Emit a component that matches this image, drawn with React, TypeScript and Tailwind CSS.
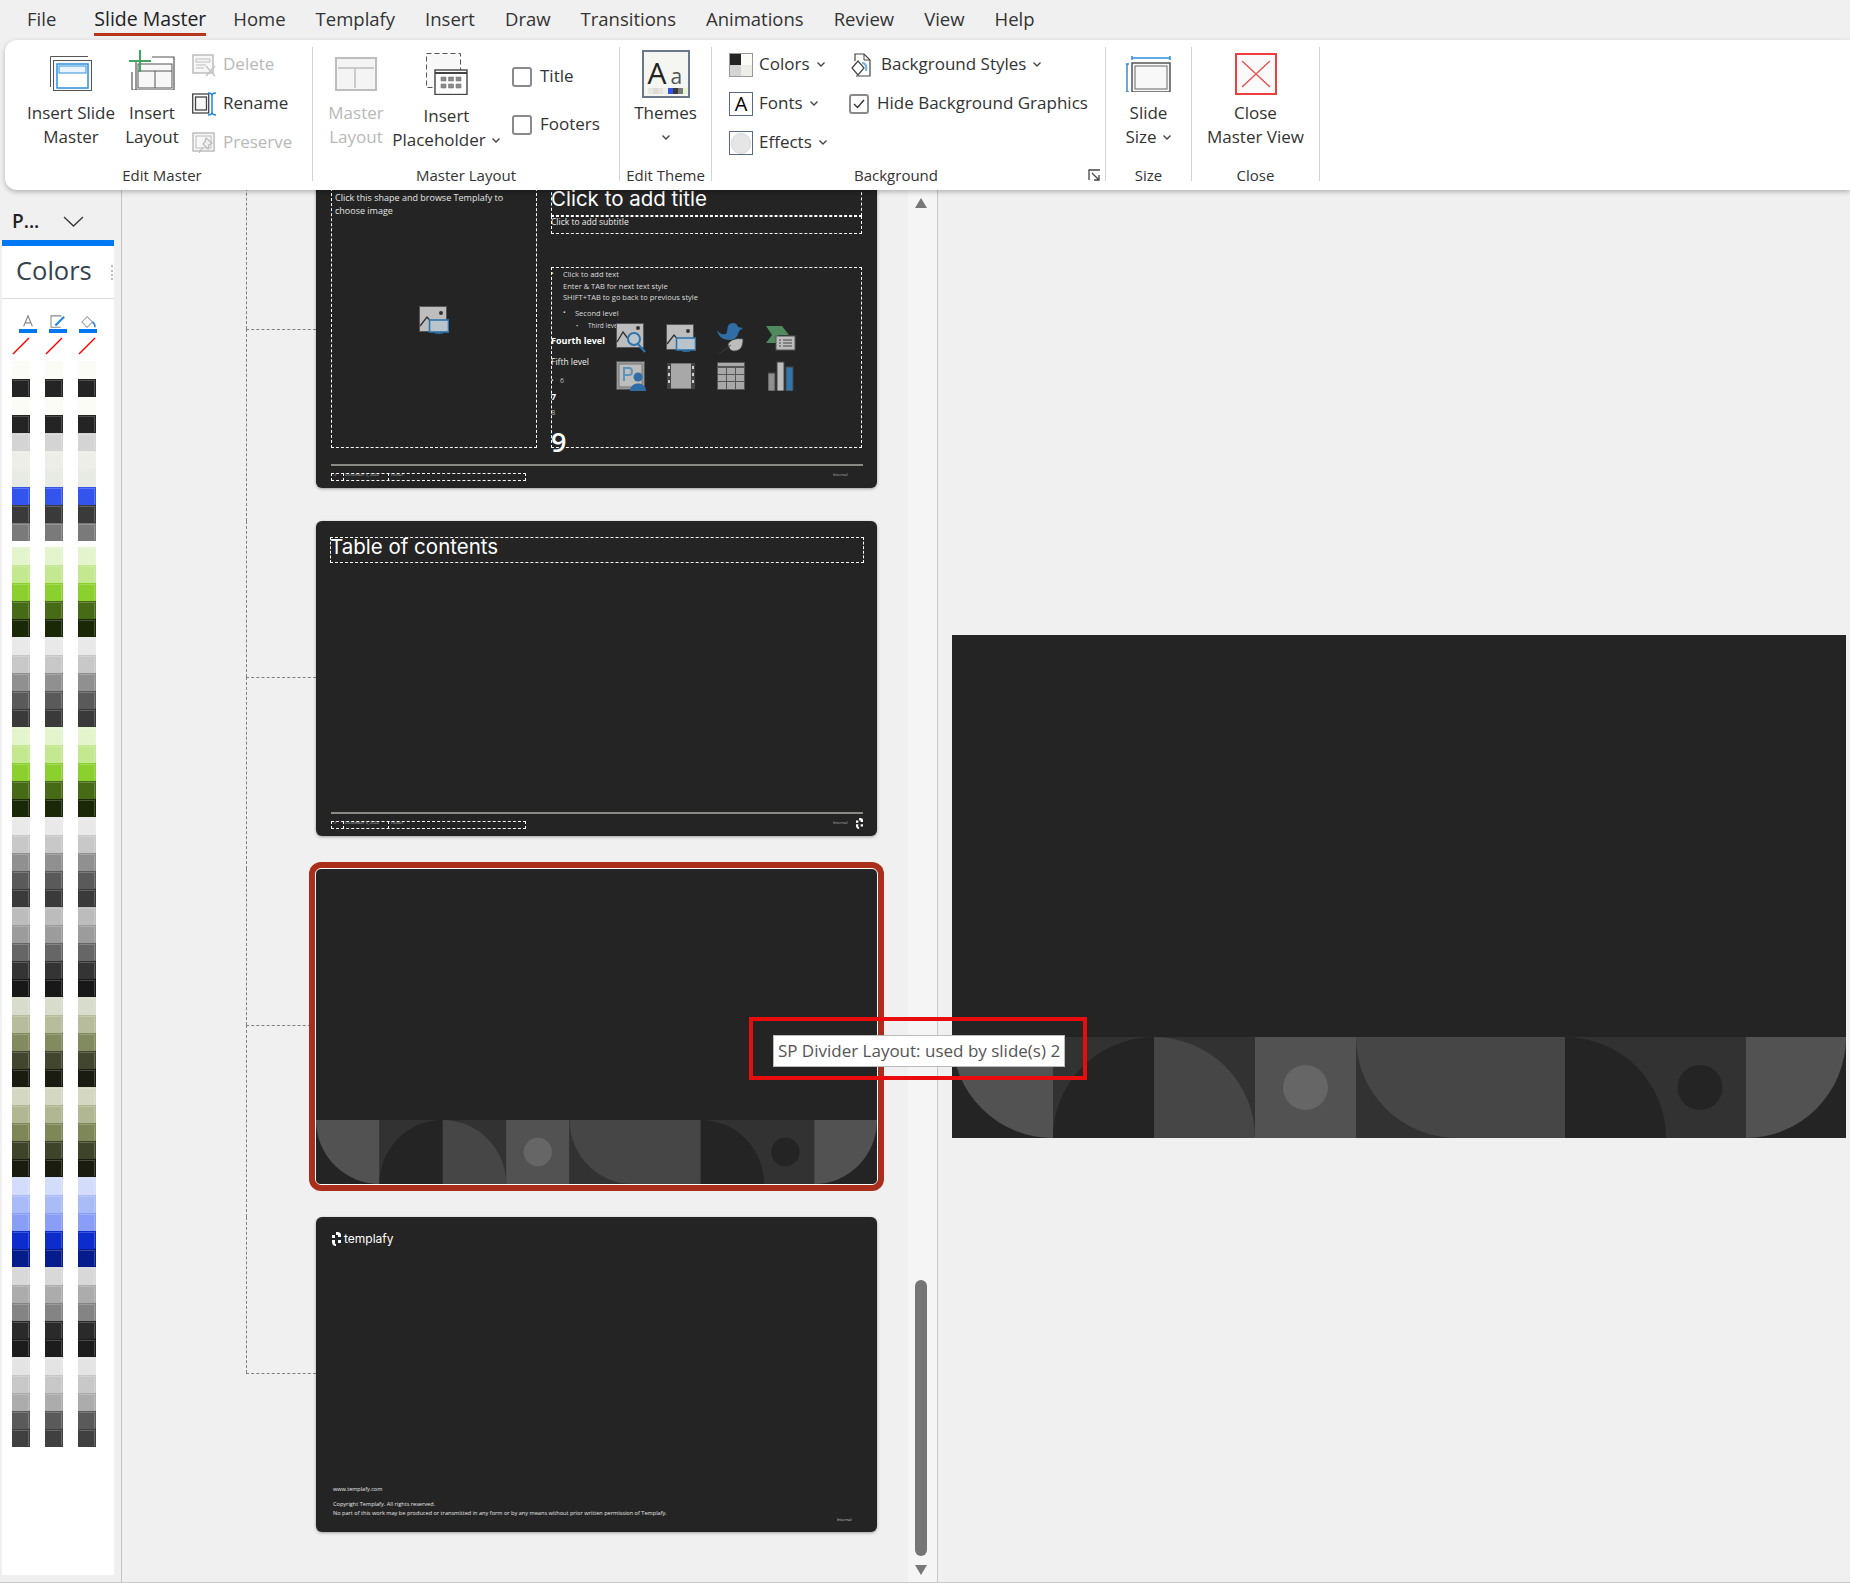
import type { ReactNode } from "react";

const sw = {
  first: ["#fafcf5", "#242424", "#fafcf5", "#242424", "#d4d4d4", "#edeee8", "#e8eae4", "#3355ee", "#3a3a3a", "#7a7a7a"],
  rest: [
    "#e4f4cd", "#c4e890", "#8cd030", "#466a16", "#1a2808",
    "#e9e9e9", "#c8c8c8", "#909090", "#5a5a5a", "#3a3a3a",
    "#e4f4cd", "#c4e890", "#8cd030", "#466a16", "#1a2808",
    "#e9e9e9", "#c8c8c8", "#909090", "#5a5a5a", "#3a3a3a",
    "#bcbcbc", "#9c9c9c", "#666666", "#343434", "#181818",
    "#d8dccc", "#b6bc9c", "#828a60", "#42462e", "#1a1c12",
    "#d4d8c2", "#b0b792", "#7e8758", "#3e442a", "#1a1c10",
    "#d4dcfc", "#aabcf8", "#8a9ef8", "#0c2ccc", "#061c8c",
    "#d8d8d8", "#acacac", "#848484", "#2a2a2a", "#1c1c1c",
    "#e4e4e4", "#c8c8c8", "#acacac", "#5a5a5a", "#404040",
  ],
};

function Chev({ w = 10 }: { w?: number }) {
  return (
    <svg width={w} height={w * 0.7} viewBox="0 0 10 7" fill="none" stroke="#444" strokeWidth="1.4">
      <path d="M1.5 1.5 5 5l3.5-3.5" />
    </svg>
  );
}

/* ---------- ribbon icons ---------- */
const InsertMasterIcon = () => (
  <svg width="42" height="35" viewBox="0 0 42 35">
    <path d="M.5 31V.5H38" fill="none" stroke="#555" />
    <rect x="3.5" y="4.5" width="38" height="30" fill="#f7f7f7" stroke="#555" />
    <rect x="7" y="8" width="31" height="24" fill="#fff" stroke="#2f8fdc" strokeWidth="1.5" />
    <rect x="9" y="10" width="27" height="7" fill="#e9f3fb" stroke="#2f8fdc" />
  </svg>
);
const InsertLayoutIcon = () => (
  <svg width="46" height="40" viewBox="0 0 46 40">
    <path d="M7 40V11M23 7h22v33H3V22" fill="none" stroke="#555" strokeWidth="1.2" />
    <rect x="9" y="14" width="34" height="24" fill="#f7f7f7" stroke="#555" />
    <path d="M9 21h34M26 21v17" stroke="#555" />
    <path d="M11 0v22M0 11h22" stroke="#3fa75f" strokeWidth="2" />
  </svg>
);
const DeleteIcon = () => (
  <svg width="25" height="23" viewBox="0 0 25 23" fill="none" stroke="#bdbdbd">
    <rect x="1" y="1" width="20" height="18" fill="#f7f7f7" strokeWidth="1.5" />
    <path d="M4 5h14v3H4zM4 11h10M4 14h8" />
    <path d="m14 12 9 10M23 12l-9 10" strokeWidth="1.6" stroke="#c4c4c4" />
  </svg>
);
const RenameIcon = () => (
  <svg width="25" height="24" viewBox="0 0 25 24" fill="none">
    <rect x=".7" y="2" width="16" height="19" stroke="#444" strokeWidth="1.3" />
    <rect x="3.500" y="5" width="11" height="13" stroke="#444" strokeWidth="1.300" fill="#f7f7f7" />
    <path d="M16 1c3 0 4 1 4 3v16c0 2 1 3 4 3M24 1c-3 0-4 1-4 3M16 23c3 0 4-1 4-3" stroke="#1e88d8" strokeWidth="1.5" />
  </svg>
);
const PreserveIcon = () => (
  <svg width="25" height="23" viewBox="0 0 25 23" fill="none" stroke="#bdbdbd">
    <rect x="1" y="1" width="21" height="18" fill="#f7f7f7" strokeWidth="1.5" />
    <rect x="4" y="4" width="15" height="12" />
    <path d="m14 6 6 5-3 2-1 4-5-5 2-2zM11 15l-4 6" strokeWidth="1.3" fill="#f0f0f0" />
  </svg>
);
const MasterLayoutIcon = () => (
  <svg width="42" height="34" viewBox="0 0 42 34" fill="none" stroke="#bdbdbd">
    <rect x="1" y="1" width="40" height="32" fill="#f4f4f4" strokeWidth="2" />
    <path d="M3 11h36M20 11v20" strokeWidth="1.5" />
  </svg>
);
const PlaceholderIcon = () => (
  <svg width="42" height="42" viewBox="0 0 42 42" fill="none">
    <rect x=".5" y=".5" width="34" height="34" fill="#f8f8f8" stroke="#555" strokeDasharray="5 3" />
    <rect x="9" y="17" width="32" height="24.5" fill="#fff" stroke="#444" strokeWidth="1.4" />
    <path d="M9 20h32" stroke="#444" strokeWidth="2" />
    <path d="M15 24h5v4h-5zM22.500 24h5v4h-5zM30 24h5v4h-5zM15 31h5v4h-5zM22.500 31h5v4h-5zM30 31h5v4h-5z" fill="#8a8a8a" stroke="#777" strokeWidth=".6" />
  </svg>
);
const ThemesIcon = () => (
  <div className="relative w-[48px] h-[48px] border-2 border-[#6b778a] bg-[#f5f6f2]">
    <span className="absolute left-[4px] top-[3px] text-[30px] leading-[36px] text-[#222]">A</span>
    <span className="absolute left-[27px] top-[12px] text-[21px] leading-[24px] text-[#555]">a</span>
    <div className="absolute left-[4px] top-[36px] flex">
      <i className="w-[5px] h-[6px] bg-[#e8e8e0]" />
      <i className="w-[5px] h-[6px] bg-[#dcdcd4]" />
      <i className="w-[5px] h-[6px] bg-[#e4e4dc]" />
      <i className="w-[5px] h-[6px] bg-[#f0f0e8]" />
      <i className="w-[5px] h-[6px] bg-[#3355ee]" />
      <i className="w-[5px] h-[6px] bg-[#3a3a3a]" />
      <i className="w-[5px] h-[6px] bg-[#7a7a7a]" />
      <i className="w-[5px] h-[6px] bg-[#e4f4cd]" />
    </div>
  </div>
);
const ColorsIcon = () => (
  <div className="w-[24px] h-[24px] grid grid-cols-2 border border-[#999]">
    <i className="bg-[#242424]" />
    <i className="bg-[#fafcf5]" />
    <i className="bg-[#d4d4d4]" />
    <i className="bg-[#edeee8]" />
  </div>
);
const FontsIcon = () => (
  <div className="w-[24px] h-[24px] border border-[#5a6a85] flex items-center justify-center text-[20px] leading-none text-black">A</div>
);
const EffectsIcon = () => (
  <div className="w-[24px] h-[24px] border border-[#5a6a85] flex items-center justify-center">
    <i className="block w-[20px] h-[21px] rounded-full bg-[#e6e6e6] border border-[#d8d8d8]" />
  </div>
);
const BgStylesIcon = () => (
  <svg width="20" height="24" viewBox="0 0 20 24" fill="none" stroke="#444">
    <path d="M4 8V1h9l6 6v16H5" strokeWidth="1.2" />
    <path d="M13 1v6h6" />
    <path d="m1 15 6-7 6 7-6 7z" fill="#fff" strokeWidth="1.2" />
    <path d="M11 10c4 0 5 4 4 8" stroke="#6fb2e8" strokeWidth="2" />
  </svg>
);
const SlideSizeIcon = () => (
  <svg width="45" height="36" viewBox="0 0 45 36" fill="none">
    <path d="M6 2h38M6 0v4M44 0v4M1 8v28M0 8h3M0 36h3" stroke="#2f8fdc" strokeWidth="1.5" />
    <rect x="6" y="7" width="38" height="29" fill="#f8f8f8" stroke="#555" strokeWidth="1.5" />
    <rect x="9" y="10" width="32" height="23" stroke="#666" />
  </svg>
);
const CloseIcon = () => (
  <svg width="42" height="42" viewBox="0 0 42 42" fill="none">
    <rect x="1" y="1" width="40" height="40" fill="#fafafa" stroke="#ef3e3e" strokeWidth="2" />
    <path d="m7 8 28 26M35 8 7 34" stroke="#ef4b4b" strokeWidth="1.3" />
  </svg>
);

function Box({ checked }: { checked?: boolean }) {
  return (
    <div className="w-[20px] h-[20px] shrink-0 rounded-[3px] border-2 border-[#8a8a8a] flex items-center justify-center">
      {checked && (
        <svg width="12" height="10" viewBox="0 0 12 10" fill="none" stroke="#333" strokeWidth="1.4">
          <path d="m1 5 3.500 3.500L11 1" />
        </svg>
      )}
    </div>
  );
}

function Group({ w, label, labelClass, children, last }: { w: string; label: string; labelClass?: string; children: ReactNode; last?: boolean }) {
  return (
    <div className={`${w} h-[134px] shrink-0 border-r border-[#d4d4d4] ${last ? "relative" : ""}`}>
      <div className="h-[121px] flex">{children}</div>
      <div className={`h-[14px] leading-[14px] text-center text-[15px] text-[#333] ${labelClass ?? ""}`}>{label}</div>
    </div>
  );
}

function Big({ w, iconH, iconTop, icon, children }: { w: string; iconH: string; iconTop: string; icon: ReactNode; children: ReactNode }) {
  return (
    <div className={`${w} shrink-0 flex flex-col items-center`}>
      <div className={`${iconH} ${iconTop} flex justify-center box-border`}>{icon}</div>
      <div className="text-center text-[17px] leading-[24px] text-[#333] whitespace-nowrap">{children}</div>
    </div>
  );
}

function Row({ icon, text, gray, iconW = "w-[31px]" }: { icon: ReactNode; text: ReactNode; gray?: boolean; iconW?: string }) {
  return (
    <div className={`h-[24px] flex items-center text-[17px] whitespace-nowrap ${gray ? "text-[#b8b8b8]" : "text-[#333]"}`}>
      <div className={`${iconW} shrink-0 flex`}>{icon}</div>
      <span className="pb-[2px]">{text}</span>
    </div>
  );
}

function Ribbon() {
  return (
    <div className="relative z-10 ml-[5px] h-[150px] pt-[7px] pl-px flex bg-white rounded-l-[12px] shadow-[0_2px_5px_rgba(0,0,0,0.25)]">
      <Group w="w-[307px]" label="Edit Master" labelClass="pl-[6px]">
        <div className="w-[22px]" />
        <Big w="w-[86px]" iconH="h-[54px]" iconTop="pt-[9px]" icon={<InsertMasterIcon />}>Insert Slide<br />Master</Big>
        <Big w="w-[50px] ml-[13px]" iconH="h-[54px]" iconTop="pt-[3px]" icon={<InsertLayoutIcon />}>Insert<br />Layout</Big>
        <div className="ml-[15px] pt-[6px] flex flex-col gap-[15px]">
          <Row gray icon={<DeleteIcon />} text="Delete" />
          <Row icon={<RenameIcon />} text="Rename" />
          <Row gray icon={<PreserveIcon />} text="Preserve" />
        </div>
      </Group>
      <Group w="w-[307px]" label="Master Layout">
        <div className="w-[12px]" />
        <div className="w-[62px] text-[#b8b8b8]">
          <div className="h-[54px] pt-[10px] flex justify-center"><MasterLayoutIcon /></div>
          <div className="text-center text-[17px] leading-[24px]">Master<br />Layout</div>
        </div>
        <div className="w-[105px] ml-[7px] shrink-0 flex flex-col items-center">
          <div className="h-[57px] pt-[6px]"><PlaceholderIcon /></div>
          <div className="text-[17px] leading-[24px] text-[#333]">Insert</div>
          <div className="text-[17px] leading-[24px] text-[#333] flex items-center gap-[5px] whitespace-nowrap">Placeholder <Chev /></div>
        </div>
        <div className="ml-[13px] pt-[20px] flex flex-col gap-[28px]">
          <div className="h-[20px] flex items-center gap-[8px] text-[17px] text-[#333]"><Box /> <span className="pb-[2px]">Title</span></div>
          <div className="h-[20px] flex items-center gap-[8px] text-[17px] text-[#333]"><Box /> <span className="pb-[2px]">Footers</span></div>
        </div>
      </Group>
      <Group w="w-[92px]" label="Edit Theme">
        <div className="w-full flex flex-col items-center">
          <div className="h-[54px] pt-[3px]"><ThemesIcon /></div>
          <div className="text-[17px] leading-[24px] text-[#333]">Themes</div>
          <div className="h-[24px] flex items-center"><Chev /></div>
        </div>
      </Group>
      <Group w="w-[394px]" label="Background" labelClass="pr-[25px]" last>
        <div className="ml-[17px] w-[122px] pt-[6px] flex flex-col gap-[15px]">
          <Row iconW="w-[30px]" icon={<ColorsIcon />} text={<span className="flex items-center gap-[6px]">Colors <Chev /></span>} />
          <Row iconW="w-[30px]" icon={<FontsIcon />} text={<span className="flex items-center gap-[6px]">Fonts <Chev /></span>} />
          <Row iconW="w-[30px]" icon={<EffectsIcon />} text={<span className="flex items-center gap-[6px]">Effects <Chev /></span>} />
        </div>
        <div className="pt-[6px] flex flex-col gap-[15px]">
          <Row iconW="w-[30px]" icon={<BgStylesIcon />} text={<span className="flex items-center gap-[6px]">Background Styles <Chev /></span>} />
          <div className="-ml-[2px]"><Row iconW="w-[28px]" icon={<Box checked />} text="Hide Background Graphics" /></div>
        </div>
        <svg className="absolute right-[4px] top-[122px]" width="13" height="12" viewBox="0 0 13 12" fill="none" stroke="#444" strokeWidth="1.3">
          <path d="M1 11V1h11M4 4l7 7M11 6v5H6" />
        </svg>
      </Group>
      <Group w="w-[86px]" label="Size">
        <div className="w-full flex flex-col items-center">
          <div className="h-[54px] pt-[9px]"><SlideSizeIcon /></div>
          <div className="text-[17px] leading-[24px] text-[#333]">Slide</div>
          <div className="text-[17px] leading-[24px] text-[#333] flex items-center gap-[5px]">Size <Chev /></div>
        </div>
      </Group>
      <Group w="w-[128px]" label="Close">
        <div className="w-full flex flex-col items-center">
          <div className="h-[54px] pt-[6px]"><CloseIcon /></div>
          <div className="text-center text-[17px] leading-[24px] text-[#333] whitespace-nowrap">Close<br />Master View</div>
        </div>
      </Group>
    </div>
  );
}

/* ---------- left colour strip ---------- */
function Swatch({ c }: { c: string }) {
  return (
    <div className="w-[18px] h-[18px] p-px flex" style={{ backgroundColor: c }}>
      <div className="flex-1 border-t border-r border-white/20" />
    </div>
  );
}

function ColorPanel() {
  const tools = [
    <svg key="a" width="18" height="14" viewBox="0 0 18 16" fill="none" stroke="#888" strokeWidth="1.4"><path d="m4 13 5-12 5 12M6 9h6" /></svg>,
    <svg key="b" width="18" height="14" viewBox="0 0 18 16" fill="none"><path d="M13 1H1v13h11" stroke="#888" strokeWidth="1.2" /><path d="m6 12 10-10" stroke="#1e88e8" strokeWidth="2.4" /></svg>,
    <svg key="c" width="18" height="14" viewBox="0 0 18 16" fill="none" stroke="#999"><path d="m2 8 6-6 6 6-6 6z" strokeWidth="1.2" /><path d="M14 8c2 1 3 3 3 6" stroke="#1e88e8" strokeWidth="1.8" /></svg>,
  ];
  return (
    <div className="w-[122px] shrink-0 pl-[2px] border-r border-[#c4c4c4]">
      <div className="h-[50px] w-[112px] flex items-center pl-[10px] pt-[12px] text-[19px] font-semibold text-[#222]">
        P...
        <svg className="ml-[24px]" width="21" height="11" viewBox="0 0 21 11" fill="none" stroke="#333" strokeWidth="1.300"><path d="m1 1 9.500 9L20 1" /></svg>
      </div>
      <div className="w-[112px] h-[6px] bg-[#0078f2]" />
      <div className="w-[112px] h-[1329px] bg-white">
        <div className="h-[53px] relative pl-[14px] pt-[6px] text-[25.500px] leading-[36px] text-[#36424e] border-b border-[#dcdcdc]">
          Colors
          <div className="absolute right-[1px] top-[19px] h-[15px] border-r-2 border-dotted border-[#bbb]" />
        </div>
        <div className="flex gap-[12px] pl-[17px] pt-[16px]">
          {tools.map((t, i) => (
            <div key={i} className="w-[18px] h-[18px] border-b-[4px] border-[#0078f2] flex justify-center">{t}</div>
          ))}
        </div>
        <div className="flex gap-[15px] pl-[10px] pt-[4px]">
          {[0, 1, 2].map((i) => (
            <svg key={i} width="18" height="18" viewBox="0 0 18 18"><path d="M1 17 17 1" stroke="#f00" strokeWidth="1.4" /></svg>
          ))}
        </div>
        <div className="flex gap-[15px] pl-[10px] pt-[6px]">
          {[0, 1, 2].map((col) => (
            <div key={col}>
              {sw.first.map((c, i) => <Swatch key={i} c={c} />)}
              <div className="h-[6px]" />
              {sw.rest.map((c, i) => <Swatch key={i} c={c} />)}
            </div>
          ))}
        </div>
      </div>
    </div>
  );
}

/* ---------- slide drawings ---------- */
function Band() {
  return (
    <svg className="block w-full h-full" viewBox="0 0 894 101" preserveAspectRatio="none">
      <rect width="894" height="101" fill="#242424" />
      <path d="M0 0H101.500V101A101 101 0 0 1 0 0Z" fill="#525252" />
      <rect x="101" width="202" height="101" fill="#323232" />
      <path d="M101 101A101 101 0 0 1 202 0V101Z" fill="#242424" />
      <path d="M202 0A101 101 0 0 1 303 101H202Z" fill="#464646" />
      <rect x="303" width="101" height="101" fill="#525252" />
      <circle cx="353.500" cy="50.500" r="22.500" fill="#666" />
      <rect x="404" width="390" height="101" fill="#323232" />
      <path d="M404 0H613V101H505A101 101 0 0 1 404 0Z" fill="#464646" />
      <path d="M613 0A101 101 0 0 1 714 101H613Z" fill="#242424" />
      <circle cx="748" cy="50.500" r="22.500" fill="#242424" />
      <path d="M794 0H894A100 101 0 0 1 794 101Z" fill="#525252" />
    </svg>
  );
}

const Mark = ({ cls }: { cls: string }) => (
  <svg className={cls} viewBox="0 0 9 14" fill="#fff">
    <path d="M0 3h3v3H0zM4 0h1.500c2 0 3.500 1 3.500 3v2H6V3H4zM0 8h3v3c0 1 .5 1 1 1v2C1.500 14 0 12.500 0 10zM6 8h3v3H6z" />
  </svg>
);

function PicMon() {
  return (
    <svg width="30" height="28" viewBox="0 0 30 28" fill="none">
      <rect x=".5" y=".5" width="27" height="25" fill="#bdbdbd" stroke="#555" />
      <path d="M1 20 8 11l6 7" stroke="#333" strokeWidth="1.4" />
      <circle cx="22" cy="7" r="2" fill="#333" />
      <rect x="10.500" y="14" width="19" height="12" fill="#b9c4cc" stroke="#2f75ad" strokeWidth="1.600" />
      <path d="M20 26v2M16 28h8" stroke="#2f75ad" strokeWidth="1.400" />
    </svg>
  );
}

function SlideIcons() {
  return (
    <div className="absolute left-[298px] top-[148px] grid grid-cols-4 gap-x-[16px] gap-y-[4px]">
      <div className="w-[34px] h-[34px] flex items-center justify-center">
        <svg width="30" height="30" viewBox="0 0 30 30" fill="none">
          <rect x=".5" y=".5" width="27" height="24" fill="#bdbdbd" stroke="#555" />
          <path d="M1 19 7 9l6 8" stroke="#333" strokeWidth="1.400" />
          <circle cx="22" cy="5" r="2" fill="#333" />
          <circle cx="18" cy="16" r="6" fill="#b9c4cc" stroke="#2f75ad" strokeWidth="2" />
          <path d="m22 21 7 8" stroke="#2f75ad" strokeWidth="2" />
        </svg>
      </div>
      <div className="w-[34px] h-[34px] flex items-center justify-center"><PicMon /></div>
      <div className="w-[34px] h-[34px] flex items-center justify-center">
        <svg width="30" height="32" viewBox="0 0 30 32">
          <path d="M1 8c3 4 5 5 9 4 2-3 1-6 2-8 2-4 9-4 10 1l5 1-4 3c-1 5-4 9-9 9-8 0-12-4-13-10z" fill="#2f6ea5" />
          <path d="M12 22c3-5 9-6 15-5 0 7-2 12-9 12-3 0-5-2-6-7zM3 32l12-9" fill="#bdbdbd" stroke="#444" strokeWidth=".8" />
        </svg>
      </div>
      <div className="w-[34px] h-[34px] flex items-center justify-center">
        <svg width="30" height="26" viewBox="0 0 30 26">
          <path d="M0 1h16l7 9H12v8H0l6-8z" fill="#4f8a5c" />
          <rect x="10" y="11" width="19" height="14" fill="#bdbdbd" stroke="#555" />
          <path d="M13 15h2M17 15h9M13 18h2M17 18h9M13 21h2M17 21h9" stroke="#444" />
        </svg>
      </div>
      <div className="w-[34px] h-[34px] flex items-center justify-center">
        <svg width="30" height="30" viewBox="0 0 30 30">
          <rect x=".5" y=".5" width="28" height="28" fill="#9a9a9a" stroke="#555" />
          <rect x="3" y="3" width="23" height="23" fill="#bdbdbd" stroke="#777" />
          <path d="M8 20V7h5c4 0 4 7 0 7H8" fill="none" stroke="#5c93bd" strokeWidth="2" />
          <circle cx="22" cy="16" r="4.500" fill="#2f6ea5" />
          <path d="M14 30c0-10 16-10 16 0z" fill="#2f6ea5" />
        </svg>
      </div>
      <div className="w-[34px] h-[34px] flex items-center justify-center">
        <svg width="28" height="26" viewBox="0 0 28 26">
          <rect width="28" height="26" fill="#a8a8a8" stroke="#444" />
          <path d="M0 0h4v26H0zM24 0h4v26h-4z" fill="#444" />
          <path d="M1 3h2v3H1zM1 10h2v3H1zM1 17h2v3H1zM25 3h2v3h-2zM25 10h2v3h-2zM25 17h2v3h-2z" fill="#ccc" />
        </svg>
      </div>
      <div className="w-[34px] h-[34px] flex items-center justify-center">
        <svg width="28" height="28" viewBox="0 0 28 28" fill="#a8a8a8">
          <rect width="28" height="28" fill="#555" />
          <path d="M1 1h26v3H1zM1 6h8v6H1zM10 6h8v6h-8zM19 6h8v6h-8zM1 13h8v6H1zM10 13h8v6h-8zM19 13h8v6h-8zM1 20h8v7H1zM10 20h8v7h-8zM19 20h8v7h-8z" />
        </svg>
      </div>
      <div className="w-[34px] h-[34px] flex items-center justify-center">
        <svg width="26" height="30" viewBox="0 0 26 30">
          <rect x="0" y="12" width="7" height="18" fill="#8f8f8f" stroke="#444" />
          <rect x="9" y="1" width="7" height="29" fill="#bdbdbd" stroke="#444" />
          <rect x="18" y="6" width="7" height="24" fill="#2f75ad" stroke="#444" />
        </svg>
      </div>
    </div>
  );
}

const dashed = "absolute border border-dashed border-white";

function SlideFooter({ mark }: { mark?: boolean }) {
  return (
    <>
      <div className="absolute left-[15px] top-[291px] w-[532px] h-[2px] bg-[#8a8a85]" />
      <div className={`${dashed} left-[15px] top-[300px] w-[195px] h-[8px]`} />
      <div className={`${dashed} left-[27px] top-[300px] w-[46px] h-[8px] border-y-0`} />
      <span className="absolute left-[18px] top-[299px] text-[4px] leading-[6px] text-[#bbb]">#</span>
      <span className="absolute left-[29px] top-[299px] text-[4px] leading-[6px] text-[#bbb]">December 9, 2024</span>
      <span className="absolute left-[75px] top-[299px] text-[4px] leading-[6px] text-[#bbb]">Footer</span>
      <span className="absolute left-[517px] top-[299px] text-[4px] leading-[6px] text-[#bbb]">Internal</span>
      {mark && <Mark cls="absolute left-[540px] top-[297px] w-[7px] h-[11px]" />}
    </>
  );
}

const lines = [
  { cls: "left-[247px] top-[97px] text-[7.500px] leading-[8px] text-[#ddd]", t: "Click to add text" },
  { cls: "left-[247px] top-[109px] text-[7.500px] leading-[8px] text-[#ddd]", t: "Enter & TAB for next text style" },
  { cls: "left-[247px] top-[120px] text-[7.500px] leading-[8px] text-[#ddd]", t: "SHIFT+TAB to go back to previous style" },
  { cls: "left-[259px] top-[136px] text-[7.500px] leading-[8px] text-[#ddd]", t: "Second level" },
  { cls: "left-[272px] top-[149px] text-[6.500px] leading-[8px] text-[#ddd]", t: "Third level" },
  { cls: "left-[235px] top-[163px] text-[9px] leading-[10px] font-bold text-white", t: "Fourth level" },
  { cls: "left-[235px] top-[184px] text-[8.500px] leading-[10px] text-[#eee]", t: "Fifth level" },
  { cls: "left-[244px] top-[204px] text-[7px] leading-[8px] text-[#bbb]", t: "6" },
  { cls: "left-[235px] top-[219px] text-[9px] leading-[10px] font-bold text-white", t: "7" },
  { cls: "left-[235px] top-[235px] text-[7.500px] leading-[8px] text-[#bbb]", t: "8" },
  { cls: "left-[235px] top-[253px] text-[27px] leading-[32px] font-semibold text-white", t: "9" },
];

function SlideOne() {
  return (
    <>
      <div className={`${dashed} left-[15px] top-[15px] w-[206px] h-[260px]`} />
      <p className="absolute left-[19px] top-[18px] w-[200px] text-[9px] leading-[13px] text-[#e4e4e4]">Click this shape and browse Templafy to choose image</p>
      <div className="absolute left-[103px] top-[133px]"><PicMon /></div>
      <div className={`${dashed} left-[235px] top-[14px] w-[311px] h-[29px]`} />
      <span className="absolute left-[235px] top-[13px] text-[20.500px] leading-[26px] font-['Inter',sans-serif] text-white">Click to add title</span>
      <div className={`${dashed} left-[235px] top-[43px] w-[311px] h-[18px]`} />
      <span className="absolute left-[235px] top-[44px] text-[8.500px] leading-[10px] text-[#eee]">Click to add subtitle</span>
      <div className={`${dashed} left-[235px] top-[94px] w-[311px] h-[181px]`} />
      {lines.map((l) => <span key={l.t} className={`absolute whitespace-nowrap ${l.cls}`}>{l.t}</span>)}
      <span className="absolute left-[235px] top-[97px] text-[7px] leading-[8px] text-[#ddd]">•</span>
      <span className="absolute left-[247px] top-[136px] text-[7px] leading-[8px] text-[#ddd]">•</span>
      <span className="absolute left-[260px] top-[149px] text-[6px] leading-[8px] text-[#ddd]">•</span>
      <span className="absolute left-[235px] top-[204px] text-[7px] leading-[8px] text-[#ddd]">•</span>
      <SlideIcons />
      <SlideFooter />
    </>
  );
}

function SlideTwo() {
  return (
    <>
      <div className={`${dashed} left-[14px] top-[16px] w-[534px] h-[26px]`} />
      <span className="absolute left-[14px] top-[13px] text-[20.500px] leading-[26px] font-['Inter',sans-serif] text-white">Table of contents</span>
      <SlideFooter mark />
    </>
  );
}

function SlideFour() {
  return (
    <>
      <Mark cls="absolute left-[16px] top-[15px] w-[9px] h-[14px]" />
      <span className="absolute left-[28px] top-[13px] text-[12px] leading-[18px] font-['Inter',sans-serif] text-white">templafy</span>
      <span className="absolute left-[17px] top-[268px] text-[5.500px] leading-[8px] text-[#e8e8e8]">www.templafy.com</span>
      <span className="absolute left-[17px] top-[283px] text-[5.600px] leading-[8px] text-[#e8e8e8]">Copyright Templafy. All rights reserved.</span>
      <span className="absolute left-[17px] top-[292px] text-[5.600px] leading-[8px] text-[#e8e8e8] whitespace-nowrap">No part of this work may be produced or transmitted in any form or by any means without prior written permission of Templafy.</span>
      <span className="absolute left-[521px] top-[300px] text-[4px] leading-[6px] text-[#ccc]">Internal</span>
    </>
  );
}

function Thumb({ children, selected, last }: { children?: ReactNode; selected?: boolean; last?: boolean }) {
  return (
    <div className="h-[348px] flex">
      <div className="w-[70px] shrink-0 flex flex-col">
        <div className="h-[156px] border-l border-dashed border-[#808080]" />
        <div className={`flex-1 border-t border-dashed border-[#808080] ${last ? "" : "border-l"}`} />
      </div>
      <div
        className={`relative bg-[#242424] rounded-[6px] ${
          selected
            ? "-ml-px -mt-px w-[563px] h-[317px] border border-white ring-[6px] ring-[#a92e1c]"
            : "w-[561px] h-[315px] shadow-[0_1px_3px_rgba(0,0,0,0.35)]"
        }`}
      >
        {children}
      </div>
    </div>
  );
}

export default function App() {
  return (
    <div className="relative w-[1850px] h-[1583px] overflow-hidden bg-[#f0f0f0] font-['Open_Sans',sans-serif] flex flex-col">
      <div className="h-[40px] pl-[27px] pb-[2px] flex items-center gap-[30px] text-[18.500px] text-[#333] whitespace-nowrap">
        <span>File</span>
        <span className="relative ml-[8px] mr-[-3px] text-[19.500px] font-medium text-[#222]">
          Slide Master
          <i className="absolute left-0 right-0 bottom-[-2px] h-[3px] bg-[#b7361c]" />
        </span>
        {["Home", "Templafy", "Insert", "Draw", "Transitions", "Animations", "Review", "View", "Help"].map((t) => (
          <span key={t}>{t}</span>
        ))}
      </div>
      <Ribbon />
      <div className="flex-1 flex min-h-0 border-b border-[#c8c8c8]">
        <ColorPanel />
        <div className="w-[786px] shrink-0 overflow-hidden pl-[124px] -mt-[17px]">
          <Thumb><SlideOne /></Thumb>
          <Thumb><SlideTwo /></Thumb>
          <Thumb selected>
            <div className="absolute left-0 right-0 bottom-0 h-[64px] rounded-b-[5px] overflow-hidden"><Band /></div>
          </Thumb>
          <Thumb last><SlideFour /></Thumb>
        </div>
        <div className="w-[30px] shrink-0 pl-[7px] pb-[7px] pt-[8px] flex flex-col bg-[#f5f5f5] border-r border-[#c8c8c8]">
          <svg width="12" height="10" viewBox="0 0 12 10" fill="#777"><path d="M6 0l6 10H0z" /></svg>
          <div className="mt-auto w-[12px] h-[276px] rounded-full bg-[#757575]" />
          <svg className="mt-[9px]" width="12" height="10" viewBox="0 0 12 10" fill="#777"><path d="M0 0h12L6 10z" /></svg>
        </div>
        <div className="flex-1 flex items-center pl-[14px]">
          <div className="w-[894px] h-[503px] flex flex-col bg-[#242424]">
            <div className="flex-1" />
            <div className="h-[101px]"><Band /></div>
          </div>
        </div>
      </div>
      <div className="absolute z-20 left-[749px] top-[1017px] w-[338px] h-[63px] border-[4px] border-[#e90c0c] flex items-center justify-center">
        <div className="mt-[5px] ml-[2px] w-[292px] h-[32px] bg-white border border-[#bbb] flex items-center justify-center text-[17px] text-[#555] whitespace-nowrap">
          SP Divider Layout: used by slide(s) 2
        </div>
      </div>
    </div>
  );
}
